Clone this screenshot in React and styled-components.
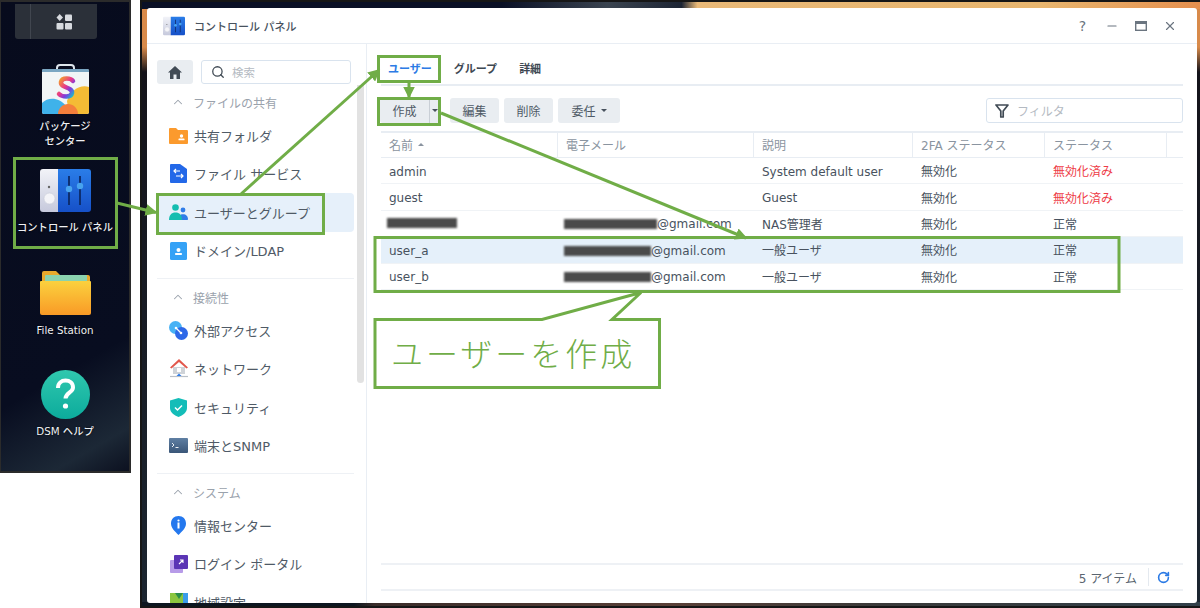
import React from "react"
import styled, { createGlobalStyle } from "styled-components"
import { ChevronUp, Search, RotateCw, Minus, X } from "lucide-react"

const GREEN = "#70ad47"

const GlobalStyle = createGlobalStyle`
  html, body {
    margin: 0;
    padding: 0;
    background: #fff;
    overflow: hidden;
  }
  body {
    font-family: "DejaVu Sans", "Noto Sans CJK JP", sans-serif;
  }
`

/* ---------- drawings ---------- */

function ControlPanelIcon({ width, height }) {
  return (
    <svg width={width} height={height} viewBox="0 0 51 43">
      <defs>
        <linearGradient id="cpBlue" x1="0" y1="0" x2="0" y2="1">
          <stop offset="0" stopColor="#2a7de8" />
          <stop offset="1" stopColor="#1650c8" />
        </linearGradient>
        <linearGradient id="cpGray" x1="0" y1="0" x2="0" y2="1">
          <stop offset="0" stopColor="#f2f3f8" />
          <stop offset="1" stopColor="#c6c9dc" />
        </linearGradient>
      </defs>
      <path d="M3 0h16v43H3a3 3 0 0 1-3-3V3a3 3 0 0 1 3-3z" fill="url(#cpGray)" />
      <path d="M18 0h30a3 3 0 0 1 3 3v37a3 3 0 0 1-3 3H18z" fill="url(#cpBlue)" />
      <circle cx="9" cy="18" r="1.2" fill="#666" />
      <circle cx="9.500" cy="29.500" r="5.500" fill="#f4f4f8" stroke="#c9ccd9" strokeWidth=".6" />
      <path d="M29 7v29M40 7v29" stroke="#0d2a66" strokeWidth="1.8" />
      <circle cx="29" cy="20" r="3.200" fill="#48a3ee" />
      <circle cx="40" cy="17" r="3.200" fill="#48a3ee" />
    </svg>
  )
}

function PackageIcon() {
  return (
    <svg width="49" height="50" viewBox="0 0 49 50">
      <defs>
        <linearGradient id="pkgS" x1="0" y1="0" x2="1" y2="1">
          <stop offset="0" stopColor="#f5a623" />
          <stop offset=".45" stopColor="#e8388a" />
          <stop offset=".7" stopColor="#7a3ee0" />
          <stop offset="1" stopColor="#17c3c9" />
        </linearGradient>
      </defs>
      <path d="M16 8V4a3 3 0 0 1 3-3h11a3 3 0 0 1 3 3v4" fill="none" stroke="#dfe6ec" strokeWidth="2" />
      <path d="M3 5h43a2 2 0 0 1 2 2v41a2 2 0 0 1-2 2H3a2 2 0 0 1-2-2V7a2 2 0 0 1 2-2z" fill="#f1f5f6" />
      <path d="M3 5h43a2 2 0 0 1 2 1v2H1V6a2 2 0 0 1 2-1z" fill="#7aa6c2" />
      <path d="M1 39c6-6 17-6 24 3l3 8H3a2 2 0 0 1-2-2z" fill="#3fb2ea" />
      <path d="M26 37c3-11 14-17 22-14v25a2 2 0 0 1-2 2H28z" fill="#f4bb35" />
      <path d="M17 50c0-6 5-10 10-10s10 4 10 10z" fill="#f47f3c" />
      <path d="M32 17c-2-3-11-4-12 1-1 6 12 5 11 11-1 5-10 4-13 1" fill="none" stroke="url(#pkgS)" strokeWidth="4.500" strokeLinecap="round" />
    </svg>
  )
}

function BigFolderIcon() {
  return (
    <svg width="51" height="45" viewBox="0 0 51 45">
      <defs>
        <linearGradient id="bigFolder" x1="0" y1="0" x2="0" y2="1">
          <stop offset="0" stopColor="#fbd13e" />
          <stop offset="1" stopColor="#f99a26" />
        </linearGradient>
      </defs>
      <path d="M2 12V3a2 2 0 0 1 2-2h12l4 4h28a2 2 0 0 1 2 2v6z" fill="#e8a92c" />
      <rect x="5" y="5" width="42" height="8" rx="1" fill="#8ad2ae" />
      <path d="M1 11h49a1 1 0 0 1 1 1v31a2 2 0 0 1-2 2H2a2 2 0 0 1-2-2V12a1 1 0 0 1 1-1z" fill="url(#bigFolder)" />
    </svg>
  )
}

function HelpIcon() {
  return (
    <svg width="49" height="49" viewBox="0 0 49 49">
      <defs>
        <linearGradient id="helpBg" x1="0" y1="0" x2="0" y2="1">
          <stop offset="0" stopColor="#30c8ae" />
          <stop offset="1" stopColor="#0cab9c" />
        </linearGradient>
      </defs>
      <circle cx="24.500" cy="24.500" r="24.500" fill="url(#helpBg)" />
      <path d="M17 18c0-5 3.500-7.500 7.500-7.500S32 13 32 17.500c0 5-7.500 5.500-7.500 11" fill="none" stroke="#fff" strokeWidth="4" />
      <circle cx="24.500" cy="36" r="2.600" fill="#fff" />
    </svg>
  )
}

const FolderSmall = () => (
  <svg width="19" height="17" viewBox="0 0 19 17">
    <path d="M0 2a1 1 0 0 1 1-1h6l2 2h9a1 1 0 0 1 1 1v12a1 1 0 0 1-1 1H1a1 1 0 0 1-1-1z" fill="#fb9a2d" />
    <circle cx="12.500" cy="9" r="1.700" fill="#fff" />
    <rect x="9.500" y="11.500" width="6" height="1.800" rx=".6" fill="#fff" />
  </svg>
)
const FileServiceIcon = () => (
  <svg width="17" height="19" viewBox="0 0 17 19">
    <path d="M1 0h9l7 5v13a1 1 0 0 1-1 1H1a1 1 0 0 1-1-1V1a1 1 0 0 1 1-1z" fill="#2368e8" />
    <path d="M10 7H4m2-2L4 7l2 2M6 12h7m-2-2 2 2-2 2" fill="none" stroke="#fff" strokeWidth="1.200" />
  </svg>
)
const UsersIcon = () => (
  <svg width="19" height="16" viewBox="0 0 19 16">
    <circle cx="6.500" cy="3.500" r="3.300" fill="#14bdb0" />
    <circle cx="14" cy="6" r="2.400" fill="#2f7de8" />
    <path d="M10 16h8.200a.8.800 0 0 0 .8-.8c0-3-2-5-5-5s-5 2-5 5z" fill="#2f7de8" />
    <path d="M0 16c0-5 2.500-7.500 6.500-7.500S13 11 13 16z" fill="#14bdb0" />
  </svg>
)
const DomainIcon = () => (
  <svg width="17" height="18" viewBox="0 0 17 18">
    <rect width="17" height="18" rx="1.500" fill="#35a2f6" />
    <circle cx="8.500" cy="8" r="2" fill="#fff" />
    <rect x="5" y="11" width="7" height="2" rx=".8" fill="#fff" />
  </svg>
)
const ExternalIcon = () => (
  <svg width="19" height="19" viewBox="0 0 19 19">
    <circle cx="6.500" cy="6.500" r="6.500" fill="#48b2f5" />
    <circle cx="12.500" cy="12.500" r="6.500" fill="#2d68e8" />
    <path d="M7 7l5 5" stroke="#fff" strokeWidth="1.300" />
    <circle cx="7" cy="7" r="1.300" fill="#fff" />
    <circle cx="12" cy="12" r="1.300" fill="#fff" />
  </svg>
)
const NetworkIcon = () => (
  <svg width="18" height="19" viewBox="0 0 18 19">
    <path d="M3 8h12v7H3z" fill="#cfd3d8" />
    <path d="M0 8.500 9 0l9 8.500-1.500 1L9 3 1.500 9.500z" fill="#e2574c" />
    <rect x="7" y="9" width="4" height="4" fill="#fff" />
    <path d="M0 17.500h18" stroke="#b9bfc7" strokeWidth="1.200" />
    <path d="M6.500 17 9 14.500l2.500 2.500z" fill="#2f7de8" />
  </svg>
)
const ShieldIcon = () => (
  <svg width="17" height="19" viewBox="0 0 17 19">
    <path d="M8.500 0 17 2.500V10c0 4-4 7.500-8.500 9C4 17.500 0 14 0 10V2.500z" fill="#14bdb8" />
    <path d="m5 9.500 2.500 2.500L12 7.500" fill="none" stroke="#fff" strokeWidth="1.500" />
  </svg>
)
const TerminalIcon = () => (
  <svg width="19" height="15" viewBox="0 0 19 15">
    <defs>
      <linearGradient id="term" x1="0" y1="0" x2="0" y2="1">
        <stop offset="0" stopColor="#5f7fa3" />
        <stop offset="1" stopColor="#3a5678" />
      </linearGradient>
    </defs>
    <rect width="19" height="15" rx="1" fill="url(#term)" />
    <path d="m3 5 2 2-2 2M6.500 9.500h3" fill="none" stroke="#fff" strokeWidth=".9" />
  </svg>
)
const InfoIcon = () => (
  <svg width="15" height="19" viewBox="0 0 15 19">
    <path d="M7.500 0C12 0 15 3 15 7.500c0 4.500-4 8-7.500 11.500C4 15.500 0 12 0 7.500 0 3 3 0 7.500 0z" fill="#2478ee" />
    <circle cx="7.500" cy="4.500" r="1.100" fill="#fff" />
    <rect x="6.500" y="6.500" width="2" height="6" fill="#fff" />
  </svg>
)
const LoginIcon = () => (
  <svg width="18" height="18" viewBox="0 0 18 18">
    <rect x="0" y="5" width="13" height="13" rx="1" fill="#b79be8" />
    <rect x="4" y="0" width="14" height="14" rx="1" fill="#5b35b5" />
    <path d="M9 9l4-4m-3 0h3v3" fill="none" stroke="#fff" strokeWidth="1.100" />
  </svg>
)
const RegionIcon = () => (
  <svg width="18" height="18" viewBox="0 0 18 18">
    <rect width="18" height="18" fill="#8bc53f" />
    <path d="M5 0l4 6 4-6z" fill="#2a8f4a" />
    <rect x="13" width="5" height="18" fill="#3a9bea" />
  </svg>
)

const HomeIcon = () => (
  <svg width="14" height="13" viewBox="0 0 14 13">
    <path d="M7 0 0 6.500h2V13h3.500V8.500h3V13H12V6.500h2z" fill="#414b55" />
  </svg>
)
const FunnelIcon = () => (
  <svg width="14" height="14" viewBox="0 0 14 14">
    <path d="M1 1h12L8.200 7v6L5.800 13V7z" fill="none" stroke="#414b55" strokeWidth="1.700" strokeLinejoin="round" />
  </svg>
)
const MaximizeIcon = () => (
  <svg width="12" height="10" viewBox="0 0 12 10">
    <rect x=".7" y=".7" width="10.600" height="8.600" fill="none" stroke="#6b7580" strokeWidth="1.400" />
    <rect x="0" y="0" width="12" height="3" fill="#6b7580" />
  </svg>
)
const DockGrid = () => (
  <svg width="16" height="16" viewBox="0 0 16 16">
    <path d="M3.700 0 7 3.500 3.700 7 .5 3.500z" fill="#d7dadf" />
    <rect x="9" y="0.500" width="7" height="6.500" rx="1" fill="#d7dadf" />
    <rect x="0.500" y="9" width="7" height="6.500" rx="1" fill="#d7dadf" />
    <rect x="9" y="9" width="7" height="6.500" rx="1" fill="#d7dadf" />
  </svg>
)

/* ---------- desktop column ---------- */

const Page = styled.div`
  position: relative;
  width: 1200px;
  height: 608px;
  display: flex;
  align-items: flex-start;
  gap: 9px;
  overflow: hidden;
`
const Desktop = styled.aside`
  box-sizing: border-box;
  width: 131px;
  height: 473px;
  flex: none;
  border: 2px solid #2b2b2b;
  border-left-width: 1px;
  background: linear-gradient(150deg, #070b1d 0%, #080d20 75%, #1c2836 92%, #0c1120 100%);
  display: flex;
  flex-direction: column;
  align-items: center;
`
const Dock = styled.div`
  box-sizing: border-box;
  width: 82px;
  height: 35px;
  margin: 2px 0 25px -18px;
  flex: none;
  background: #2b3039;
  border-radius: 0 0 3px 3px;
  border-left: 15px solid #2b3039;
  box-shadow: inset 1px 0 0 #41464f;
  display: flex;
  align-items: center;
  justify-content: center;
`
const DesktopItem = styled.div`
  width: 115px;
  height: ${(p) => p.$h}px;
  display: flex;
  flex-direction: column;
  align-items: center;
  flex: none;
`
const DesktopLabel = styled.div`
  margin-top: ${(p) => p.$gap}px;
  color: #eef0f4;
  font-size: 10.300px;
  font-weight: 500;
  line-height: 15px;
  text-align: center;
  white-space: pre-line;
  text-shadow: 0 0 2px #000;
`

/* ---------- window ---------- */

const Wallpaper = styled.main`
  box-sizing: border-box;
  flex: 1;
  height: 608px;
  padding: 6px 3px 3px 5px;
  border: 2px solid #161616;
  border-right: 0;
  background:
    linear-gradient(to right, #0a1026 0 34%, #3a4450 44%, #1c2434 51%, #e9b978 52.500%, #e8b66f 85%, #e58f4e 100%) top / 100% 7px no-repeat,
    linear-gradient(to right, #0d1620 0 20%, #3a2c2a 22%, #5a4038 50%, #3a3a3a 70%, #31404a 100%) bottom / 100% 4px no-repeat,
    linear-gradient(to bottom, #d88a4a 0 45px, #14131a 70px, #1b2530 100%);
`
const Window = styled.section`
  height: 100%;
  background: #fff;
  border-radius: 3px;
  display: flex;
  flex-direction: column;
  overflow: hidden;
`
const TitleBar = styled.header`
  box-sizing: border-box;
  height: 36px;
  flex: none;
  padding: 0 20px 0 16px;
  display: flex;
  align-items: center;
  gap: 9px;
  border-bottom: 1px solid #e9eef4;
`
const TitleText = styled.div`
  flex: 1;
  color: #48525e;
  font-size: 11px;
  font-weight: 500;
`
const WinButton = styled.div`
  width: 29px;
  height: 20px;
  display: flex;
  align-items: center;
  justify-content: center;
  color: #6b7580;
  font-size: 14px;
`
const WinControls = styled.div`
  display: flex;
  margin-right: -7px;
`
const Body = styled.div`
  flex: 1;
  min-height: 0;
  display: flex;
`

/* ---------- sidebar ---------- */

const Sidebar = styled.nav`
  position: relative;
  box-sizing: border-box;
  width: 220px;
  flex: none;
  padding: 16px 12px 0 10px;
  border-right: 1px solid #e9eef4;
  overflow: hidden;
`
const SearchRow = styled.div`
  display: flex;
  gap: 8px;
  height: 24px;
  margin-bottom: 6px;
  width: 194px;
`
const HomeButton = styled.div`
  width: 36px;
  background: #e9edf1;
  border-radius: 3px;
  display: flex;
  align-items: center;
  justify-content: center;
`
const SearchBox = styled.div`
  flex: 1;
  box-sizing: border-box;
  border: 1px solid #d9e3ee;
  border-radius: 3px;
  display: flex;
  align-items: center;
  gap: 7px;
  padding-left: 9px;
  color: #b4bac2;
  font-size: 11.500px;
  svg {
    color: #414b55;
  }
`
const SectionHead = styled.div`
  height: 24px;
  margin: 0 0 2px 14px;
  display: flex;
  align-items: center;
  gap: 8px;
  color: #9aa2ac;
  font-size: 12px;
`
const NavItem = styled.div`
  box-sizing: border-box;
  width: 197px;
  height: 38.500px;
  padding-left: 12px;
  display: flex;
  align-items: center;
  border-radius: 4px;
  background: ${(p) => (p.$active ? "#e6f0fa" : "transparent")};
  color: #4f5a66;
  font-size: 13px;
  white-space: nowrap;
`
const NavIcon = styled.span`
  width: 19px;
  margin-right: 6px;
  display: flex;
  align-items: center;
  justify-content: center;
`
const Divider = styled.hr`
  width: 197px;
  height: 1px;
  margin: 8px 0 6px;
  border: 0;
  background: #eef1f5;
`
const ScrollThumb = styled.div`
  position: absolute;
  left: 210px;
  top: 41px;
  width: 7px;
  height: 298px;
  border-radius: 0 0 4px 4px;
  background: #e2e2e2;
`

/* ---------- main pane ---------- */

const Pane = styled.div`
  flex: 1;
  min-width: 0;
  padding: 0 14px 12px;
  display: flex;
  flex-direction: column;
`
const Tabs = styled.div`
  box-sizing: border-box;
  height: 42px;
  flex: none;
  padding: 8px 0 0 7px;
  display: flex;
  align-items: center;
  gap: 22px;
  border-bottom: 2px solid #e8edf3;
`
const Tab = styled.div`
  color: ${(p) => (p.$active ? "#2c7be5" : "#3e4852")};
  font-size: 11px;
  font-weight: 700;
`
const Toolbar = styled.div`
  height: 25px;
  flex: none;
  margin: 12px 0 8px -1px;
  display: flex;
  gap: 5px;
`
const Button = styled.div`
  box-sizing: border-box;
  width: ${(p) => p.$w}px;
  background: #e9edf1;
  border-radius: 3px;
  display: flex;
  align-items: center;
  justify-content: center;
  gap: 5px;
  color: #4f5a66;
  font-size: 12px;
`
const SplitButton = styled(Button)`
  margin-right: 5px;
  gap: 0;
`
const SplitMain = styled.div`
  flex: 1;
  align-self: stretch;
  display: flex;
  align-items: center;
  justify-content: center;
  border-right: 1px solid #c9cfd6;
`
const Caret = styled.span`
  width: 0;
  height: 0;
  border-left: 3px solid transparent;
  border-right: 3px solid transparent;
  ${(p) =>
    p.$up ? "border-bottom: 3px solid #8a94a0;" : "border-top: 3px solid #48525e;"}
`
const CaretSlot = styled.div`
  width: 10px;
  display: flex;
  justify-content: center;
`
const FilterBox = styled.div`
  box-sizing: border-box;
  width: 197px;
  margin-left: auto;
  border: 1px solid #d9e3ee;
  border-radius: 3px;
  padding-left: 8px;
  display: flex;
  align-items: center;
  gap: 8px;
  color: #b4bac2;
  font-size: 12px;
`
const Table = styled.div`
  flex: 1;
  min-height: 0;
`
const HeadRow = styled.div`
  box-sizing: border-box;
  height: 27px;
  display: grid;
  grid-template-columns: 177px 196px 159px 132px 122px 1fr;
  border-top: 2px solid #e8edf3;
  border-bottom: 1px solid #e8edf3;
  color: #8a94a0;
  font-size: 12px;
`
const HeadCell = styled.div`
  padding: 0 0 2px 8px;
  display: flex;
  align-items: center;
  gap: 5px;
  border-right: 1px solid #e8edf3;
  &:last-child {
    border-right: 0;
  }
`
const Row = styled.div`
  box-sizing: border-box;
  height: 26.400px;
  display: grid;
  grid-template-columns: 177px 196px 159px 132px 122px 1fr;
  border-bottom: 1px solid #f0f3f6;
  background: ${(p) => (p.$selected ? "#e5f0fa" : "transparent")};
  color: #48525e;
  font-size: 12px;
`
const Cell = styled.div`
  padding: ${(p) => (p.$latin ? 2 : 0)}px 0 0 8px;
  display: flex;
  align-items: center;
  white-space: nowrap;
  color: ${(p) => (p.$danger ? "#ee3b46" : "inherit")};
`
const Redacted = styled.span`
  display: inline-block;
  width: ${(p) => p.$w}px;
  height: 10px;
  margin-left: -2px;
  background: #4a4a4a;
  filter: blur(1.200px);
`
const Footer = styled.footer`
  box-sizing: border-box;
  height: 28px;
  flex: none;
  display: flex;
  align-items: center;
  justify-content: flex-end;
  border-top: 2px solid #eef1f5;
  border-bottom: 2px solid #eef1f5;
  color: #5a6570;
  font-size: 12px;
`
const FooterSep = styled.div`
  width: 1px;
  height: 18px;
  margin: 0 8px 0 11px;
  background: #e4e9ef;
`
const RefreshSlot = styled.div`
  width: 13px;
  margin-right: 13px;
  display: flex;
  color: #2c7be5;
`

/* ---------- annotations over the screenshot ---------- */

const Overlay = styled.svg`
  position: absolute;
  inset: 0;
  pointer-events: none;
`
const CalloutText = styled.div`
  position: absolute;
  left: 391px;
  top: 330px;
  color: ${GREEN};
  font-size: 32px;
  line-height: 44px;
  letter-spacing: 3px;
  font-weight: 300;
  font-family: "Noto Sans CJK JP", sans-serif;
  white-space: nowrap;
`

function Annotations() {
  return (
    <>
      <Overlay width="1200" height="608" viewBox="0 0 1200 608">
        <defs>
          <marker id="head" markerWidth="4" markerHeight="4" refX="3.500" refY="2" orient="auto">
            <path d="M0 0 4 2 0 4z" fill={GREEN} />
          </marker>
        </defs>
        <g fill="none" stroke={GREEN} strokeWidth="3">
          <rect x="14.500" y="158.500" width="102" height="89" />
          <rect x="157.500" y="194.500" width="166" height="39" />
          <rect x="378.500" y="56.500" width="61" height="25" />
          <rect x="378.500" y="98.500" width="61" height="26" />
          <rect x="375" y="237.500" width="744" height="54" />
          <path d="M117 203 156 212.500" markerEnd="url(#head)" />
          <path d="M241 194 379 70" markerEnd="url(#head)" />
          <path d="M409 82V97" markerEnd="url(#head)" />
          <path d="M441 113 746 238" markerEnd="url(#head)" />
          <path d="M375 319.500H542L641 292.500 612 319.500H659.500V387.500H375Z" fill="#fff" strokeLinejoin="miter" />
        </g>
      </Overlay>
      <CalloutText>ユーザーを作成</CalloutText>
    </>
  )
}

/* ---------- data ---------- */

const groups = [
  {
    title: "ファイルの共有",
    items: [
      ["共有フォルダ", FolderSmall],
      ["ファイル サービス", FileServiceIcon],
      ["ユーザーとグループ", UsersIcon, true],
      ["ドメイン/LDAP", DomainIcon],
    ],
  },
  {
    title: "接続性",
    items: [
      ["外部アクセス", ExternalIcon],
      ["ネットワーク", NetworkIcon],
      ["セキュリティ", ShieldIcon],
      ["端末とSNMP", TerminalIcon],
    ],
  },
  {
    title: "システム",
    items: [
      ["情報センター", InfoIcon],
      ["ログイン ポータル", LoginIcon],
      ["地域設定", RegionIcon],
    ],
  },
]

const users = [
  { name: "admin", desc: "System default user", latinDesc: true, state: "無効化済み", off: true },
  { name: "guest", desc: "Guest", latinDesc: true, state: "無効化済み", off: true },
  { hideName: 70, hideMail: 93, desc: "NAS管理者", state: "正常" },
  { name: "user_a", hideMail: 87, desc: "一般ユーザ", state: "正常", selected: true },
  { name: "user_b", hideMail: 87, desc: "一般ユーザ", state: "正常" },
]

export default function App() {
  return (
    <Page>
      <GlobalStyle />
      <Desktop>
        <Dock>
          <DockGrid />
        </Dock>
        <DesktopItem $h={105}>
          <PackageIcon />
          <DesktopLabel $gap={5}>{"パッケージ\nセンター"}</DesktopLabel>
        </DesktopItem>
        <DesktopItem $h={101}>
          <ControlPanelIcon width={51} height={43} />
          <DesktopLabel $gap={8}>コントロール パネル</DesktopLabel>
        </DesktopItem>
        <DesktopItem $h={100}>
          <BigFolderIcon />
          <DesktopLabel $gap={8}>File Station</DesktopLabel>
        </DesktopItem>
        <DesktopItem $h={70}>
          <HelpIcon />
          <DesktopLabel $gap={5}>DSM ヘルプ</DesktopLabel>
        </DesktopItem>
      </Desktop>

      <Wallpaper>
        <Window>
          <TitleBar>
            <ControlPanelIcon width={22} height={20} />
            <TitleText>コントロール パネル</TitleText>
            <WinControls>
              <WinButton>?</WinButton>
              <WinButton>
                <Minus size={14} strokeWidth={1.800} />
              </WinButton>
              <WinButton>
                <MaximizeIcon />
              </WinButton>
              <WinButton>
                <X size={14} strokeWidth={2} />
              </WinButton>
            </WinControls>
          </TitleBar>
          <Body>
            <Sidebar>
              <SearchRow>
                <HomeButton>
                  <HomeIcon />
                </HomeButton>
                <SearchBox>
                  <Search size={14} strokeWidth={2.200} />
                  検索
                </SearchBox>
              </SearchRow>
              {groups.map((group, i) => (
                <div key={group.title}>
                  {i > 0 && <Divider />}
                  <SectionHead>
                    <ChevronUp size={14} strokeWidth={1.800} />
                    {group.title}
                  </SectionHead>
                  {group.items.map(([label, Icon, active]) => (
                    <NavItem key={label} $active={active}>
                      <NavIcon>
                        <Icon />
                      </NavIcon>
                      {label}
                    </NavItem>
                  ))}
                </div>
              ))}
              <ScrollThumb />
            </Sidebar>
            <Pane>
              <Tabs>
                <Tab $active>ユーザー</Tab>
                <Tab>グループ</Tab>
                <Tab>詳細</Tab>
              </Tabs>
              <Toolbar>
                <SplitButton $w={60}>
                  <SplitMain>作成</SplitMain>
                  <CaretSlot>
                    <Caret />
                  </CaretSlot>
                </SplitButton>
                <Button $w={49}>編集</Button>
                <Button $w={49}>削除</Button>
                <Button $w={62}>
                  委任 <Caret />
                </Button>
                <FilterBox>
                  <FunnelIcon />
                  フィルタ
                </FilterBox>
              </Toolbar>
              <Table>
                <HeadRow>
                  <HeadCell>
                    名前 <Caret $up />
                  </HeadCell>
                  <HeadCell>電子メール</HeadCell>
                  <HeadCell>説明</HeadCell>
                  <HeadCell>2FA ステータス</HeadCell>
                  <HeadCell>ステータス</HeadCell>
                  <HeadCell />
                </HeadRow>
                {users.map((u, i) => (
                  <Row key={i} $selected={u.selected}>
                    <Cell $latin={!u.hideName}>
                      {u.hideName ? <Redacted $w={u.hideName} /> : u.name}
                    </Cell>
                    <Cell $latin>
                      {u.hideMail && (
                        <>
                          <Redacted $w={u.hideMail} />
                          @gmail.com
                        </>
                      )}
                    </Cell>
                    <Cell $latin={u.latinDesc}>{u.desc}</Cell>
                    <Cell>無効化</Cell>
                    <Cell $danger={u.off}>{u.state}</Cell>
                    <Cell />
                  </Row>
                ))}
              </Table>
              <Footer>
                5 アイテム
                <FooterSep />
                <RefreshSlot>
                  <RotateCw size={13} strokeWidth={3} />
                </RefreshSlot>
              </Footer>
            </Pane>
          </Body>
        </Window>
      </Wallpaper>

      <Annotations />
    </Page>
  )
}
